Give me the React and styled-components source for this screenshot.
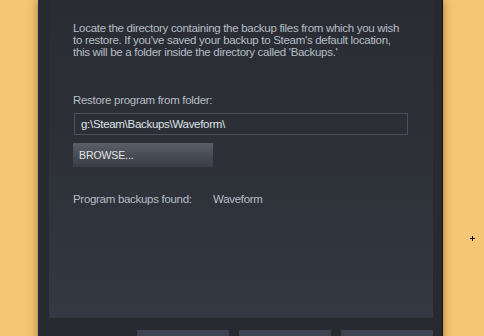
import React from "react";
import styled, { createGlobalStyle } from "styled-components";

const Global = createGlobalStyle`
  html, body {
    margin: 0;
    padding: 0;
    background: #f5c674;
    overflow: hidden;
  }
  body {
    font-family: "Liberation Sans", Arial, sans-serif;
  }
`;

const Page = styled.div`
  position: relative;
  width: 484px;
  height: 336px;
  overflow: hidden;
`;

const Dialog = styled.div`
  margin-left: 38px;
  width: 405px;
  height: 360px;
  background: #272b31;
  border-left: 1px solid #1d2a44;
  border-right: 1px solid #0e0f12;
  box-shadow: 0 0 9px rgba(90, 50, 0, 0.55);
  padding: 0 9px 0 10px;
  box-sizing: border-box;
  display: flex;
  flex-direction: column;
`;

const Panel = styled.div`
  height: 318px;
  flex-shrink: 0;
  background: linear-gradient(to bottom, #292d33 0%, #2d3137 50%, #333843 100%);
  padding: 22px 24px 0 24px;
  box-sizing: border-box;
  display: flex;
  flex-direction: column;
  align-items: flex-start;
`;

const Text = styled.p`
  margin: 0;
  font-size: 11.5px;
  letter-spacing: -0.3px;
  line-height: 12px;
  color: #b6bec7;
  white-space: nowrap;
`;

const Label = styled(Text)`
  margin-top: ${(p) => p.$top || 0}px;
`;

const Input = styled.div`
  margin-top: 7px;
  margin-left: 1px;
  width: 334px;
  height: 22px;
  box-sizing: border-box;
  border: 1px solid #4b505c;
  padding: 0 6px;
  display: flex;
  align-items: center;
  font-size: 11.5px;
  letter-spacing: -0.3px;
  color: #dfe3e7;
`;

const Browse = styled.button`
  margin-top: 8px;
  width: 140px;
  height: 24px;
  border: none;
  padding: 0 6px;
  text-align: left;
  font-family: "Liberation Sans", Arial, sans-serif;
  font-size: 10.5px;
  letter-spacing: -0.1px;
  color: #e2e4e7;
  background: linear-gradient(to bottom, #5a5e67 0%, #474b53 55%, #3a3d45 100%);
`;

const Found = styled.div`
  margin-top: 26px;
  display: grid;
  grid-template-columns: 140px auto;
  font-size: 11.5px;
  letter-spacing: -0.3px;
  line-height: 12px;
  color: #b6bec7;
`;

const Footer = styled.div`
  margin-top: 12px;
  display: flex;
  justify-content: flex-end;
  gap: 10px;
`;

const FooterButton = styled.div`
  width: 92px;
  height: 24px;
  background: #3d4350;
`;

const Cross = styled.svg`
  position: absolute;
  left: 470px;
  top: 236px;
`;

export default function App() {
  return (
    <Page>
      <Global />
      <Dialog>
        <Panel>
          <Text>
            Locate the directory containing the backup files from which you wish
            <br />
            to restore. If you've saved your backup to Steam's default location,
            <br />
            this will be a folder inside the directory called 'Backups.'
          </Text>
          <Label $top={36}>Restore program from folder:</Label>
          <Input>g:\Steam\Backups\Waveform\</Input>
          <Browse>BROWSE...</Browse>
          <Found>
            <span>Program backups found:</span>
            <span>Waveform</span>
          </Found>
        </Panel>
        <Footer>
          <FooterButton />
          <FooterButton />
          <FooterButton />
        </Footer>
      </Dialog>
      <Cross width="5" height="5" viewBox="0 0 5 5">
        <path d="M2 0h1v5H2zM0 2h5v1H0z" fill="#000" />
      </Cross>
    </Page>
  );
}
